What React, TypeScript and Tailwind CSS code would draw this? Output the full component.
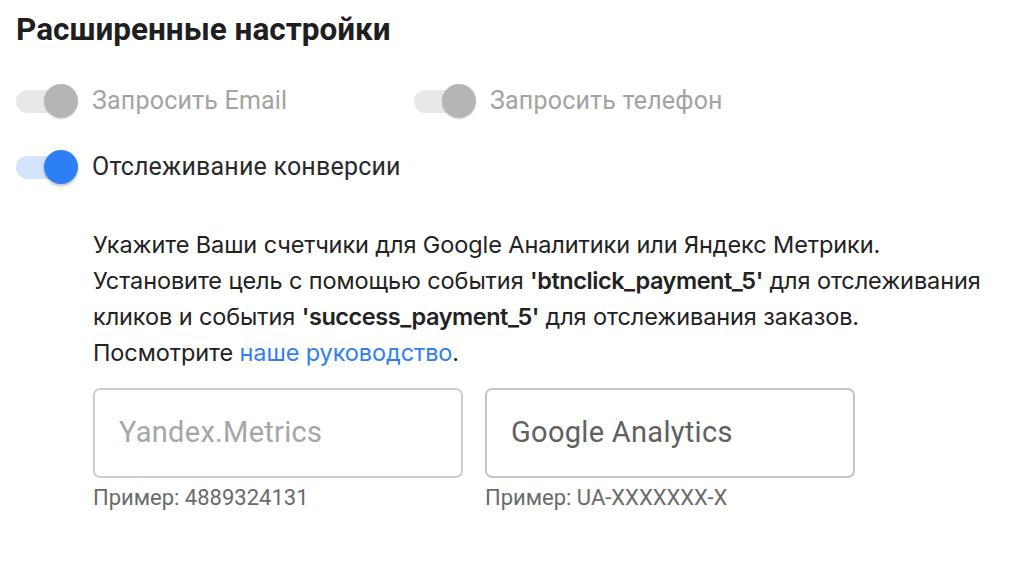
import React from "react";

function Toggle({ on, label, muted }: { on: boolean; label: string; muted?: boolean }) {
  return (
    <div className="flex items-center">
      <div className="relative w-[64px] h-[36px] flex items-center">
        <div className={`ml-[1px] w-[58px] h-[23px] rounded-full ${on ? "bg-[#d3e4fc]" : "bg-[#e8e8e8]"}`} />
        <div
          className={`absolute left-[29px] top-[1px] w-[34px] h-[34px] rounded-full ${
            on ? "bg-[#2d7ff5] shadow-[0_2px_3px_rgba(0,0,0,0.25)]" : "bg-[#b5b5b5] shadow-[0_1px_2px_rgba(0,0,0,0.15)]"
          }`}
        />
      </div>
      <span className={`ml-[13px] text-[25px] tracking-[0.2px] leading-[36px] ${muted ? "text-[#a3a3a3]" : "text-[#2a2a2a]"}`}>{label}</span>
    </div>
  );
}

export default function App() {
  return (
    <div className="w-[1024px] h-[564px] bg-white font-['Roboto',sans-serif] pl-[15px] pt-[11px]">
      <h1 className="text-[31.5px] font-bold text-[#1f1f1f] leading-[38px] ml-[1px]">Расширенные настройки</h1>
      <div className="mt-[34px] flex">
        <div className="w-[398px]">
          <Toggle on={false} label="Запросить Email" muted />
        </div>
        <Toggle on={false} label="Запросить телефон" muted />
      </div>
      <div className="mt-[30px]">
        <Toggle on={true} label="Отслеживание конверсии" />
      </div>
      <div className="ml-[78px] mt-[42px]">
        <p className="font-['Inter',sans-serif] text-[23.5px] leading-[36px] text-[#222] tracking-[-0.1px]">
          Укажите Ваши счетчики для Google Аналитики или Яндекс Метрики.
          <br />
          Установите цель с помощью события <b className="font-semibold tracking-[-0.45px]">'btnclick_payment_5'</b> для отслеживания
          <br />
          кликов и события <b className="font-semibold tracking-[-0.45px]">'success_payment_5'</b> для отслеживания заказов.
          <br />
          Посмотрите <a className="text-[#2f7ff0]">наше руководство</a>.
        </p>
        <div className="mt-[17px] flex gap-[22px]">
          <div className="w-[370px]">
            <div className="h-[90px] border-2 border-[#cfcfcf] rounded-[7px] flex items-center pl-[24px]">
              <span className="text-[29px] text-[#a6a6a6] tracking-[0.3px]">Yandex.Metrics</span>
            </div>
            <div className="mt-[6px] text-[22px] leading-[28px] text-[#6a6a6a]">Пример: 4889324131</div>
          </div>
          <div className="w-[370px]">
            <div className="h-[90px] border-2 border-[#c4c4c4] rounded-[7px] flex items-center pl-[24px]">
              <span className="text-[29px] text-[#606060] tracking-[0.3px]">Google Analytics</span>
            </div>
            <div className="mt-[6px] text-[22px] leading-[28px] text-[#6a6a6a]">Пример: UA-XXXXXXX-X</div>
          </div>
        </div>
      </div>
    </div>
  );
}
